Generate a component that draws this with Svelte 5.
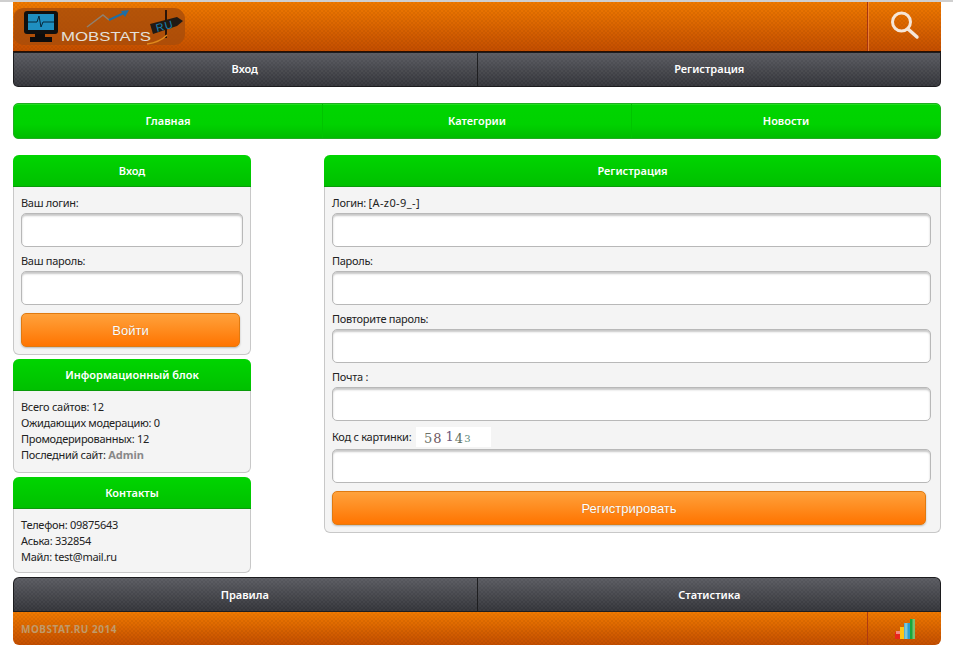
<script>
  const info = ['Всего сайтов: 12', 'Ожидающих модерацию: 0', 'Промодерированных: 12'];
  const contacts = ['Телефон: 09875643', 'Аська: 332854', 'Майл: test@mail.ru'];
  const fields = ['Пароль:', 'Повторите пароль:', 'Почта :'];
</script>

<div class="page">
  <header class="orange top">
    <div class="logo">
      <svg width="172" height="37" viewBox="0 0 172 37">
        <rect x="-1" y="0" width="172" height="37" rx="11" fill="#a84c0a" opacity=".8" />
        <path d="M16 29h22v5H16z" fill="#0c0c0c" />
        <path d="M21 24h10v6H21z" fill="#0c0c0c" />
        <rect x="10" y="3" width="34" height="23" rx="3" fill="#10100f" />
        <rect x="14" y="6" width="26" height="16" fill="#1f8fc0" />
        <path d="M14 14h9l2-6 2 11 2-5h11" fill="none" stroke="#06283a" stroke-width="1" />
        <path d="M73 19l16-12 6 5" fill="none" stroke="#8f8070" stroke-width="1.5" />
        <path d="M95 12l15-7" fill="none" stroke="#1f6ea3" stroke-width="2" />
        <path d="M107 3l8-1-4 7z" fill="#1f6ea3" />
        <text x="47" y="33" class="brand" textLength="90" lengthAdjust="spacingAndGlyphs">MOBSTATS</text>
        <path d="M152 2v28" stroke="#2a1408" stroke-width="2" />
        <path d="M136 16l27-7 6 4-6 5-24 8z" fill="#201a14" />
        <text x="143" y="24" class="ru" transform="rotate(-15 143 24)">RU</text>
        <path d="M133 36c8-1 15-4 20-9" fill="none" stroke="#e08a1c" stroke-width="1.4" />
      </svg>
    </div>
    <div class="search">
      <svg width="30" height="30" viewBox="0 0 30 30" fill="none" stroke="#f6e6d8">
        <circle cx="11.5" cy="11" r="9" stroke-width="3" />
        <path d="M18 18l9 8" stroke-width="3.4" stroke-linecap="round" />
      </svg>
    </div>
  </header>

  <nav class="dark bottom-round">
    <a href="#a">Вход</a>
    <a href="#a">Регистрация</a>
  </nav>

  <nav class="green-nav">
    <a href="#a">Главная</a>
    <a href="#a">Категории</a>
    <a href="#a">Новости</a>
  </nav>

  <main>
    <div class="left">
      <section class="panel">
        <h2>Вход</h2>
        <div class="body form">
          <div class="label">Ваш логин:</div>
          <input type="text" />
          <div class="label">Ваш пароль:</div>
          <input type="password" />
          <button class="login">Войти</button>
        </div>
      </section>

      <section class="panel">
        <h2>Информационный блок</h2>
        <div class="body list info">
          {#each info as line}<div>{line}</div>{/each}
          <div>Последний сайт: <b>Admin</b></div>
        </div>
      </section>

      <section class="panel">
        <h2>Контакты</h2>
        <div class="body list">
          {#each contacts as line}<div>{line}</div>{/each}
        </div>
      </section>
    </div>

    <section class="panel right">
      <h2>Регистрация</h2>
      <div class="body form">
        <div class="label">Логин: <span class="hint">[A-z0-9_-]</span></div>
        <input type="text" />
        {#each fields as f}
          <div class="label">{f}</div>
          <input type="text" />
        {/each}
        <div class="label captcha-row">
          <span class="code">Код с картинки:</span>
          <span class="captcha"><i class="a">5</i><i class="b">8</i><i class="c">1</i><i class="d">4</i><i class="e">3</i></span>
        </div>
        <input type="text" />
        <button class="register">Регистрировать</button>
      </div>
    </section>
  </main>

  <nav class="dark top-round">
    <a href="#a">Правила</a>
    <a href="#a">Статистика</a>
  </nav>

  <footer class="orange foot">
    <span class="copy">MOBSTAT.RU 2014</span>
    <div class="stat">
      <svg width="22" height="21" viewBox="0 0 22 21">
        <rect x="0" y="14" width="5" height="7" fill="#e8261c" />
        <rect x="1" y="13" width="4" height="3" fill="#f28a80" />
        <rect x="5" y="9" width="4" height="12" fill="#ffc515" />
        <rect x="9" y="5" width="6" height="16" fill="#2a9fd0" />
        <rect x="9.5" y="5" width="3" height="16" fill="#7fc6d6" />
        <rect x="15" y="1" width="5" height="20" fill="#18a83a" />
        <rect x="17.5" y="1" width="2.5" height="20" fill="#7ac070" />
      </svg>
    </div>
  </footer>
</div>

<style>
  :global(body) {
    margin: 0;
    background: #fff;
  }
  .page {
    box-sizing: border-box;
    width: 953px;
    height: 651px;
    padding: 0 12px 0 13px;
    border-top: 2px solid #cfcfcf;
    font: 11px/16px "Noto Sans", Tahoma, sans-serif;
    color: #222;
    overflow: hidden;
  }
  .orange {
    display: flex;
    justify-content: space-between;
    background-color: #e06e00;
    background-image:
      repeating-conic-gradient(rgba(0, 0, 0, 0.05) 0 25%, transparent 0 50%),
      linear-gradient(#f07a00, #c44e00);
    background-size: 4px 4px, 100% 100%;
  }
  .top {
    height: 50px;
    align-items: stretch;
    border-bottom: 1px solid #2a0f00;
    box-sizing: border-box;
  }
  .logo {
    padding: 6px 0 0 1px;
    height: 37px;
  }
  .brand {
    font: 13.5px "Liberation Sans", sans-serif;
    fill: #e4e0da;
  }
  .ru {
    font: 11px "Liberation Sans", sans-serif;
    letter-spacing: 1px;
    fill: #1a83b5;
  }
  .search {
    width: 74px;
    border-left: 1px solid #a83410;
    box-shadow: inset 1px 0 0 rgba(255, 150, 80, 0.6);
    display: flex;
    justify-content: center;
    padding-top: 9px;
    box-sizing: border-box;
  }
  nav {
    display: flex;
    font-weight: 600;
  }
  nav a {
    flex: 1;
    color: #fff;
    text-align: center;
    text-decoration: none;
    line-height: 35px;
  }
  .dark {
    height: 35px;
    background-color: #45464c;
    background-image:
      repeating-conic-gradient(rgba(255, 255, 255, 0.035) 0 25%, transparent 0 50%),
      linear-gradient(#5a5b61, #323338);
    background-size: 4px 4px, 100% 100%;
    box-shadow: inset 0 0 0 1px #1c1c1e;
  }
  .dark a + a {
    border-left: 1px solid #1e1e20;
  }
  .bottom-round {
    border-radius: 0 0 5px 5px;
  }
  .bottom-round a {
    line-height: 33px;
  }
  .top-round {
    border-radius: 6px 6px 0 0;
  }
  .green-nav {
    height: 36px;
    margin-top: 16px;
    border-radius: 5px;
    background: linear-gradient(#00d500 0, #00d200 60%, #00bc00 100%);
    border: 1px solid #1fae1f;
    box-sizing: border-box;
    box-shadow: inset 0 1px 0 #20dc20;
  }
  .green-nav a {
    line-height: 34px;
  }
  .green-nav a + a {
    border-left: 1px solid #00c400;
  }
  main {
    display: grid;
    grid-template-columns: 238px 617px;
    gap: 73px;
    margin: 16px 0 4px;
    align-items: start;
  }
  .left {
    display: flex;
    flex-direction: column;
    gap: 4px;
  }
  .panel {
    background: #f4f4f4;
    border: 1px solid #c8c8c8;
    border-top: 0;
    border-radius: 6px;
    box-sizing: border-box;
  }
  h2 {
    margin: 0 -1px;
    height: 32px;
    font-size: 11px;
    line-height: 32px;
    font-weight: 600;
    text-align: center;
    color: #fff;
    border-radius: 6px 6px 0 0;
    background: linear-gradient(#00d500, #00c000);
    border-bottom: 1px solid #0a9a0a;
    box-sizing: border-box;
  }
  .body {
    padding: 8px 7px 7px;
    letter-spacing: -0.28px;
  }
  .form {
    display: flex;
    flex-direction: column;
    align-items: flex-start;
  }
  .label {
    height: 16px;
    margin-bottom: 2px;
  }
  .hint {
    letter-spacing: 0.4px;
  }
  input {
    display: block;
    box-sizing: border-box;
    width: 222px;
    height: 34px;
    margin: 0 0 6px;
    background: #fff;
    border: 1px solid #b8b8b8;
    border-radius: 5px;
    box-shadow: inset 0 2px 2px rgba(0, 0, 0, 0.22);
    outline: 0;
  }
  .right input {
    width: 599px;
  }
  button {
    box-sizing: border-box;
    height: 34px;
    margin-top: 2px;
    border: 1px solid #e07a10;
    border-radius: 5px;
    background: linear-gradient(#ffa23c, #ff7400);
    color: #fff;
    font: 13px "Liberation Sans", Arial, sans-serif;
    box-shadow: 0 1px 2px rgba(0, 0, 0, 0.25);
    text-shadow: 0 0 1px rgba(150, 90, 30, 0.6);
    padding: 0;
  }
  .login {
    width: 219px;
  }
  .register {
    width: 594px;
  }
  .list {
    padding-bottom: 7px;
  }
  .info {
    padding-bottom: 9px;
  }
  .list div {
    height: 16px;
  }
  .list b {
    color: #888;
    font-weight: 700;
    letter-spacing: 0;
  }
  .captcha-row {
    height: 20px;
    display: flex;
    align-items: center;
  }
  .code {
    width: 84px;
    white-space: nowrap;
  }
  .captcha {
    width: 75px;
    height: 20px;
    background: #fff;
    font-family: "DejaVu Serif", serif;
    line-height: 23px;
    padding-left: 8px;
    box-sizing: border-box;
    white-space: nowrap;
    letter-spacing: 0;
  }
  .captcha i {
    font-style: normal;
  }
  .a { font-size: 13px; color: #6c7068; margin-right: 1px; }
  .b { font-size: 13px; color: #6e5560; margin-right: 4px; }
  .c { font-size: 13px; color: #6c5a80; margin-right: 1px; position: relative; top: -2px; }
  .d { font-size: 13px; color: #5c7060; margin-right: 1px; }
  .e { font-size: 10px; color: #5a8878; position: relative; top: -1px; }
  .foot {
    height: 33px;
    border-radius: 0 0 6px 6px;
    align-items: stretch;
  }
  .copy {
    padding-left: 8px;
    line-height: 34px;
    font-weight: 700;
    font-size: 10px;
    letter-spacing: 0.5px;
    color: #c09a6a;
  }
  .stat {
    width: 74px;
    box-sizing: border-box;
    border-left: 1px solid #b03a10;
    display: flex;
    justify-content: flex-end;
    padding: 6px 24px 0 0;
  }
</style>
